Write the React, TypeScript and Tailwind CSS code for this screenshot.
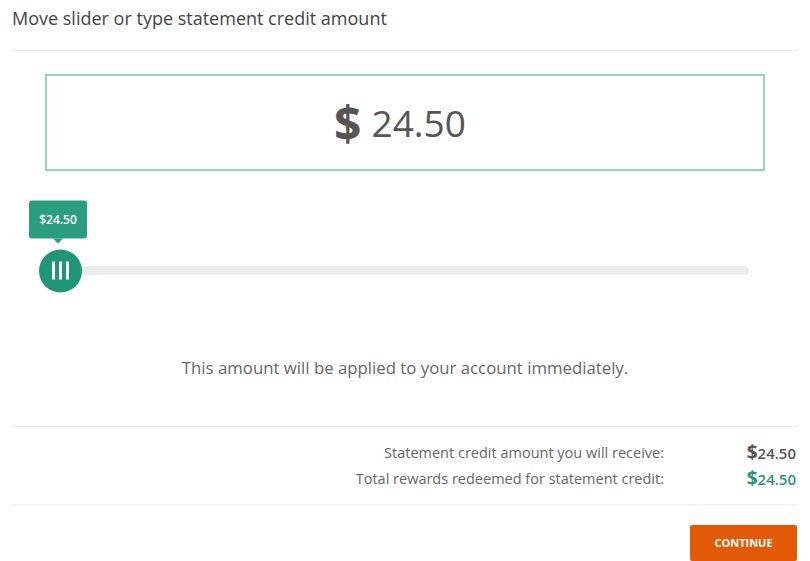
import React from "react";

function SliderThumb() {
  return (
    <div className="absolute left-[-1px] top-1/2 h-[43px] w-[43px] -translate-y-1/2">
      <div className="absolute bottom-[54px] left-[-10px] flex h-[38px] w-[58px] items-center justify-center rounded-[3px] bg-[#2a9d80] text-[12px] font-semibold text-white">
        $24.50
        <span className="absolute left-1/2 top-full h-0 w-0 -translate-x-1/2 border-x-[5px] border-t-[5px] border-x-transparent border-t-[#2a9d80]" />
      </div>
      <div className="flex h-full w-full items-center justify-center gap-[4px] rounded-full bg-[#1f9676]">
        <span className="h-[18px] w-[3px] bg-white" />
        <span className="h-[18px] w-[3px] bg-white" />
        <span className="h-[18px] w-[3px] bg-white" />
      </div>
    </div>
  );
}

export default function App() {
  return (
    <div className="h-[561px] w-[810px] overflow-hidden bg-white px-3 font-['Open_Sans',sans-serif]">
      <div className="flex h-[51px] items-start border-b border-[#eeeeee] pt-[5px] text-[18px] text-[#444444]">
        Move slider or type statement credit amount
      </div>

      <div className="mx-[33px] mt-[23px] flex h-[97px] items-center justify-center border-2 border-[#93d5c3] pr-[10px] shadow-[0_1px_2px_rgba(0,0,0,0.08)] text-[#555555]">
        <span className="text-[48px] font-bold leading-none">$</span>
        <span className="ml-[10px] text-[37px] leading-none">24.50</span>
      </div>

      <div className="relative ml-[28px] mt-[95px] h-[9px] w-[709px] rounded-full bg-[#ececec]">
        <SliderThumb />
      </div>

      <p className="mt-[82px] text-center text-[16.8px] leading-[22px] text-[#666666]">
        This amount will be applied to your account immediately.
      </p>

      <div className="mt-[47px] border-t border-[#eeeeee]" />

      <div className="flex flex-col gap-[4px] pt-[15px] pb-[14px] text-[14.5px] leading-[22px] text-[#666666]">
        <div className="flex h-[22px] items-center">
          <span className="flex-1 text-right">Statement credit amount you will receive:</span>
          <span className="w-[134px] pr-[2px] text-right text-[15px] font-semibold text-[#555555]">
            <span className="text-[19px] font-bold leading-none">$</span>24.50
          </span>
        </div>
        <div className="flex h-[22px] items-center">
          <span className="flex-1 text-right">Total rewards redeemed for statement credit:</span>
          <span className="w-[134px] pr-[2px] text-right text-[15px] font-semibold text-[#26957a]">
            <span className="text-[19px] font-bold leading-none">$</span>24.50
          </span>
        </div>
      </div>

      <div className="border-t border-[#eeeeee]" />

      <div className="flex justify-end pr-px pt-[20px]">
        <button
          type="button"
          className="h-[36px] w-[107px] rounded-[2px] bg-[#e25a05] text-[11px] font-bold text-white"
        >
          CONTINUE
        </button>
      </div>
    </div>
  );
}
